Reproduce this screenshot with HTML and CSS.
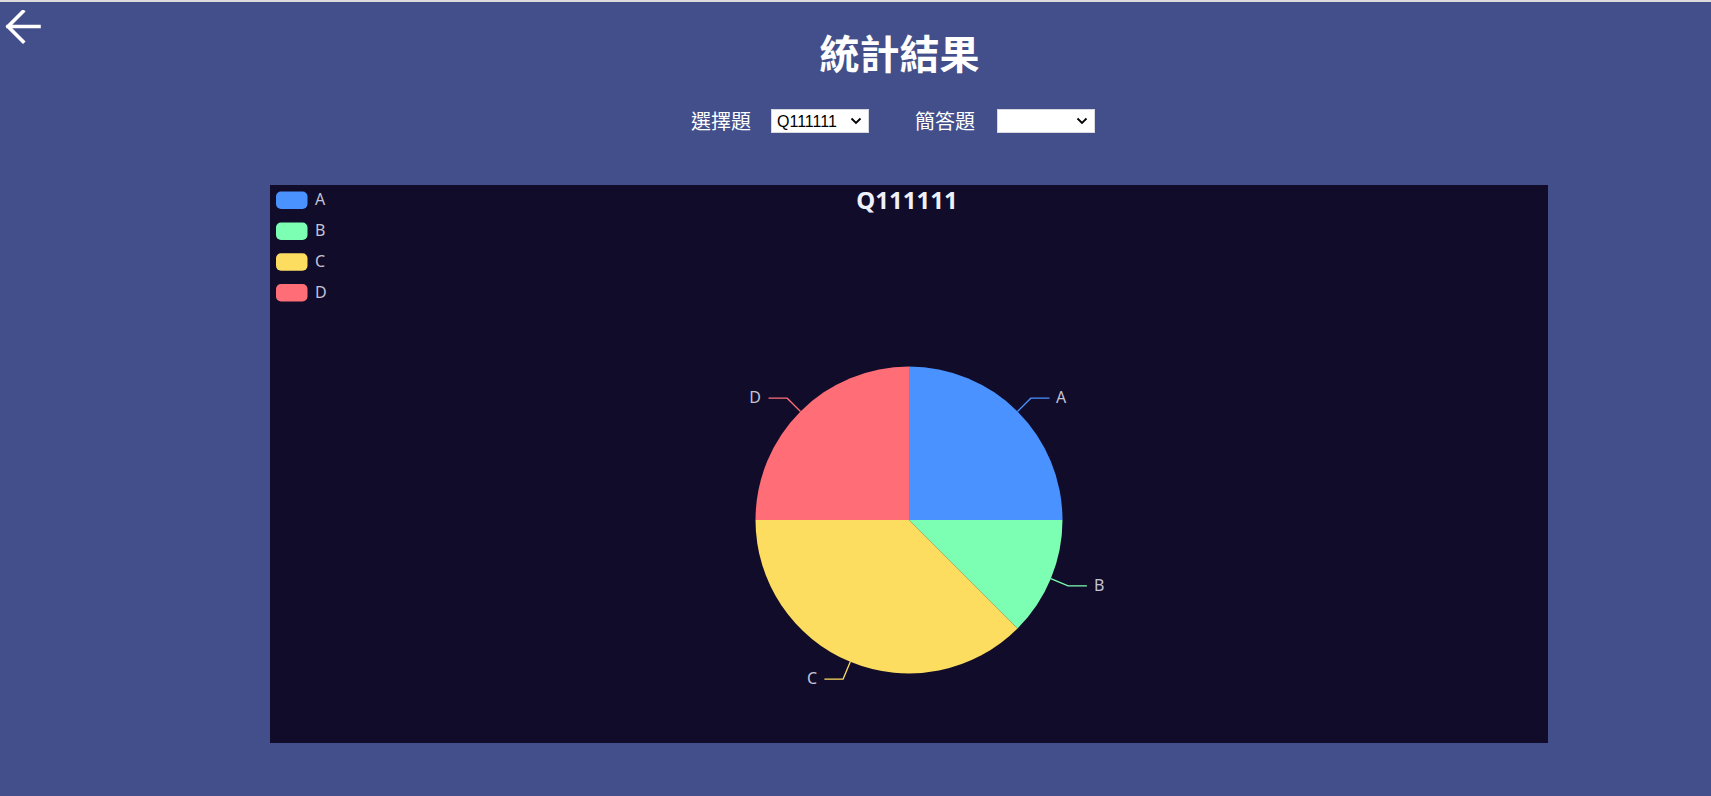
FILE: index.html
```html
<!DOCTYPE html>
<html lang="zh-Hant">
<head>
<meta charset="utf-8">
<title>統計結果</title>
<link rel="stylesheet" href="styles.css">
</head>
<body>
<div class="page">
  <header class="header">
    <a class="back" href="#" aria-label="返回">
      <svg width="36" height="34" viewBox="0 0 36 34">
        <path d="M34 16.5 H3 M18 1.5 L3 16.5 L18 31.5" fill="none" stroke="#fff" stroke-width="3.6" stroke-linecap="square" stroke-linejoin="miter"/>
      </svg>
    </a>
    <h1 class="title">統計結果</h1>
  </header>

  <div class="filters">
    <label class="filter-label">選擇題</label>
    <div class="select-wrap select-one">
      <select class="select"><option>Q111111</option></select>
      <svg class="chev" width="12" height="8" viewBox="0 0 12 8"><path d="M1.5 1.5 L6 6 L10.5 1.5" fill="none" stroke="#000" stroke-width="1.8"/></svg>
    </div>
    <label class="filter-label second">簡答題</label>
    <div class="select-wrap select-two">
      <select class="select"><option></option></select>
      <svg class="chev" width="12" height="8" viewBox="0 0 12 8"><path d="M1.5 1.5 L6 6 L10.5 1.5" fill="none" stroke="#000" stroke-width="1.8"/></svg>
    </div>
  </div>

  <section class="chart">
    <svg class="chart-svg" width="1278" height="558" viewBox="0 0 1278 558">
      <text class="chart-title" x="637" y="23.5" text-anchor="middle">Q111111</text>

      <g class="legend">
        <rect x="6" y="6.5" width="31.5" height="17.5" rx="5" fill="#4992ff"/>
        <text x="45" y="14">A</text>
        <rect x="6" y="37.5" width="31.5" height="17.5" rx="5" fill="#7cffb2"/>
        <text x="45" y="45">B</text>
        <rect x="6" y="68.3" width="31.5" height="17.5" rx="5" fill="#fddd60"/>
        <text x="45" y="75.8">C</text>
        <rect x="6" y="99" width="31.5" height="17.5" rx="5" fill="#ff6e76"/>
        <text x="45" y="106.5">D</text>
      </g>

      <g class="pie">
        <path d="M639 335 L639 181.5 A153.5 153.5 0 0 1 792.5 335 Z" fill="#4992ff"/>
        <path d="M639 335 L792.5 335 A153.5 153.5 0 0 1 747.54 443.54 Z" fill="#7cffb2"/>
        <path d="M639 335 L747.54 443.54 A153.5 153.5 0 0 1 485.5 335 Z" fill="#fddd60"/>
        <path d="M639 335 L485.5 335 A153.5 153.5 0 0 1 639 181.5 Z" fill="#ff6e76"/>
      </g>

      <g class="label-lines" fill="none" stroke-width="1.3">
        <polyline points="747.5,226.5 760.8,213.2 779.5,213.2" stroke="#4992ff"/>
        <polyline points="780.8,393.7 798.1,400.9 816.9,400.9" stroke="#7cffb2"/>
        <polyline points="580.3,476.8 573.1,494.1 554.4,494.1" stroke="#fddd60"/>
        <polyline points="530.5,226.5 517.2,213.2 498.5,213.2" stroke="#ff6e76"/>
      </g>

      <g class="labels">
        <text x="786" y="212">A</text>
        <text x="824" y="399.5">B</text>
        <text x="547" y="493" text-anchor="end">C</text>
        <text x="491" y="212" text-anchor="end">D</text>
      </g>
    </svg>
  </section>
</div>
</body>
</html>
```

FILE: styles.css
```css
html, body {
  margin: 0;
  padding: 0;
}

body {
  background: #434f8a;
  border-top: 2px solid #dcdcdc;
  height: 794px;
  overflow: hidden;
  font-family: "Noto Sans CJK TC", "Noto Sans", sans-serif;
  color: #fff;
}

.page {
  display: flex;
  flex-direction: column;
}

.header {
  display: flex;
  align-items: flex-start;
  height: 106px;
}

.back {
  display: block;
  width: 83px;
  padding: 8px 0 0 5px;
  line-height: 0;
}

.title {
  flex: 1;
  margin: 26px 0 0;
  text-align: center;
  font-size: 40px;
  line-height: 48px;
  font-weight: 700;
  color: #fff;
}

.filters {
  display: flex;
  align-items: center;
  justify-content: center;
  padding-left: 75px;
  height: 26px;
}

.filter-label {
  font-size: 20px;
  line-height: 26px;
  color: #fff;
  margin-right: 20px;
}

.filter-label.second {
  margin-left: 46px;
  margin-right: 22px;
}

.select-wrap {
  position: relative;
  width: 98px;
  height: 24px;
}

.select {
  appearance: none;
  -webkit-appearance: none;
  -moz-appearance: none;
  display: block;
  box-sizing: border-box;
  width: 98px;
  height: 24px;
  margin: 0;
  padding: 0 0 0 5px;
  border: 1px solid #d8d8e0;
  border-radius: 0;
  background: #fff;
  color: #000;
  font-family: "Liberation Sans", Arial, sans-serif;
  font-size: 16px;
}

.chev {
  position: absolute;
  right: 7px;
  top: 8px;
  pointer-events: none;
}

.chart {
  margin: 51px 0 0 270px;
  width: 1278px;
  height: 558px;
  background: #100c2a;
  line-height: 0;
}

.chart-svg {
  display: block;
  overflow: visible;
}

.chart-title {
  font-family: "Noto Sans", "Open Sans", sans-serif;
  font-weight: 700;
  font-size: 24px;
  fill: #eef1fa;
}

.legend text,
.labels text {
  font-family: "Noto Sans", "Open Sans", sans-serif;
  font-size: 16px;
  fill: #c4c3d6;
  dominant-baseline: central;
}
```
